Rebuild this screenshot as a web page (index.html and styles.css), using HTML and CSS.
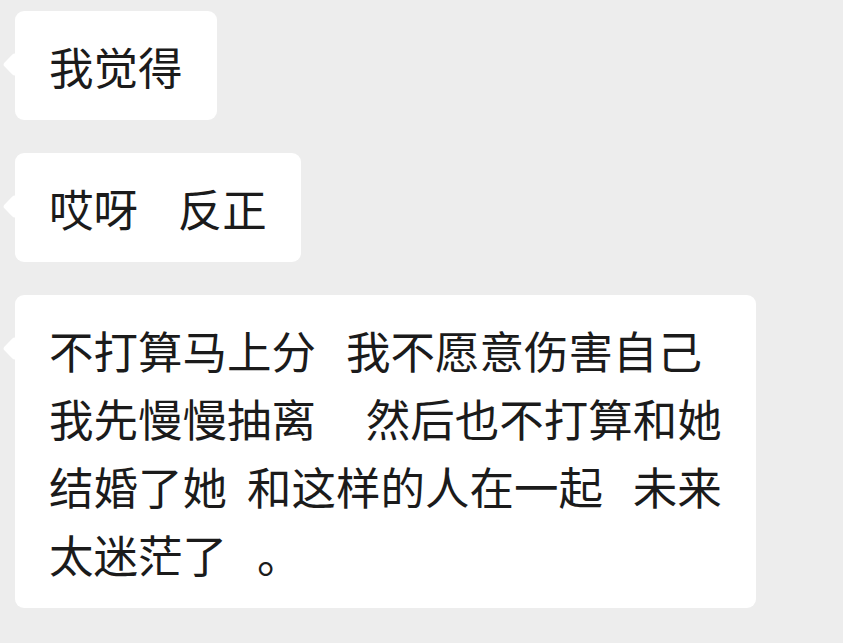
FILE: index.html
```html
<!DOCTYPE html>
<html lang="zh-CN">
<head>
  <meta charset="UTF-8" />
  <title>聊天记录</title>
  <link rel="stylesheet" href="styles.css">
</head>
<body>
  <div class="chat">
    <div class="bubble">我觉得</div>
    <div class="bubble">哎呀    反正</div>
    <div class="bubble">不打算马上分   我不愿意伤害自己
我先慢慢抽离     然后也不打算和她
结婚了她  和这样的人在一起   未来
太迷茫了   。</div>
  </div>
</body>
</html>
```

FILE: styles.css
```css
body {
  margin: 0;
  padding: 0;
  background-color: #ededed;
  font-family: "Noto Sans CJK SC", "Noto Sans", sans-serif;
}

.chat {
  display: flex;
  flex-direction: column;
  align-items: flex-start;
  gap: 33px;
  padding: 11px 0 0 15px;
}

.bubble {
  position: relative;
  background-color: #fff;
  border-radius: 9px;
  padding: 21px 34px 20px 34px;
  font-size: 44.5px;
  line-height: 68px;
  color: #1b1b1b;
  white-space: pre;
}

/* little tail pointing at the sender */
.bubble::before {
  content: "";
  position: absolute;
  left: -9px;
  top: 45px;
  width: 17px;
  height: 17px;
  background-color: #fff;
  border-radius: 3px;
  transform: rotate(45deg);
}
```
